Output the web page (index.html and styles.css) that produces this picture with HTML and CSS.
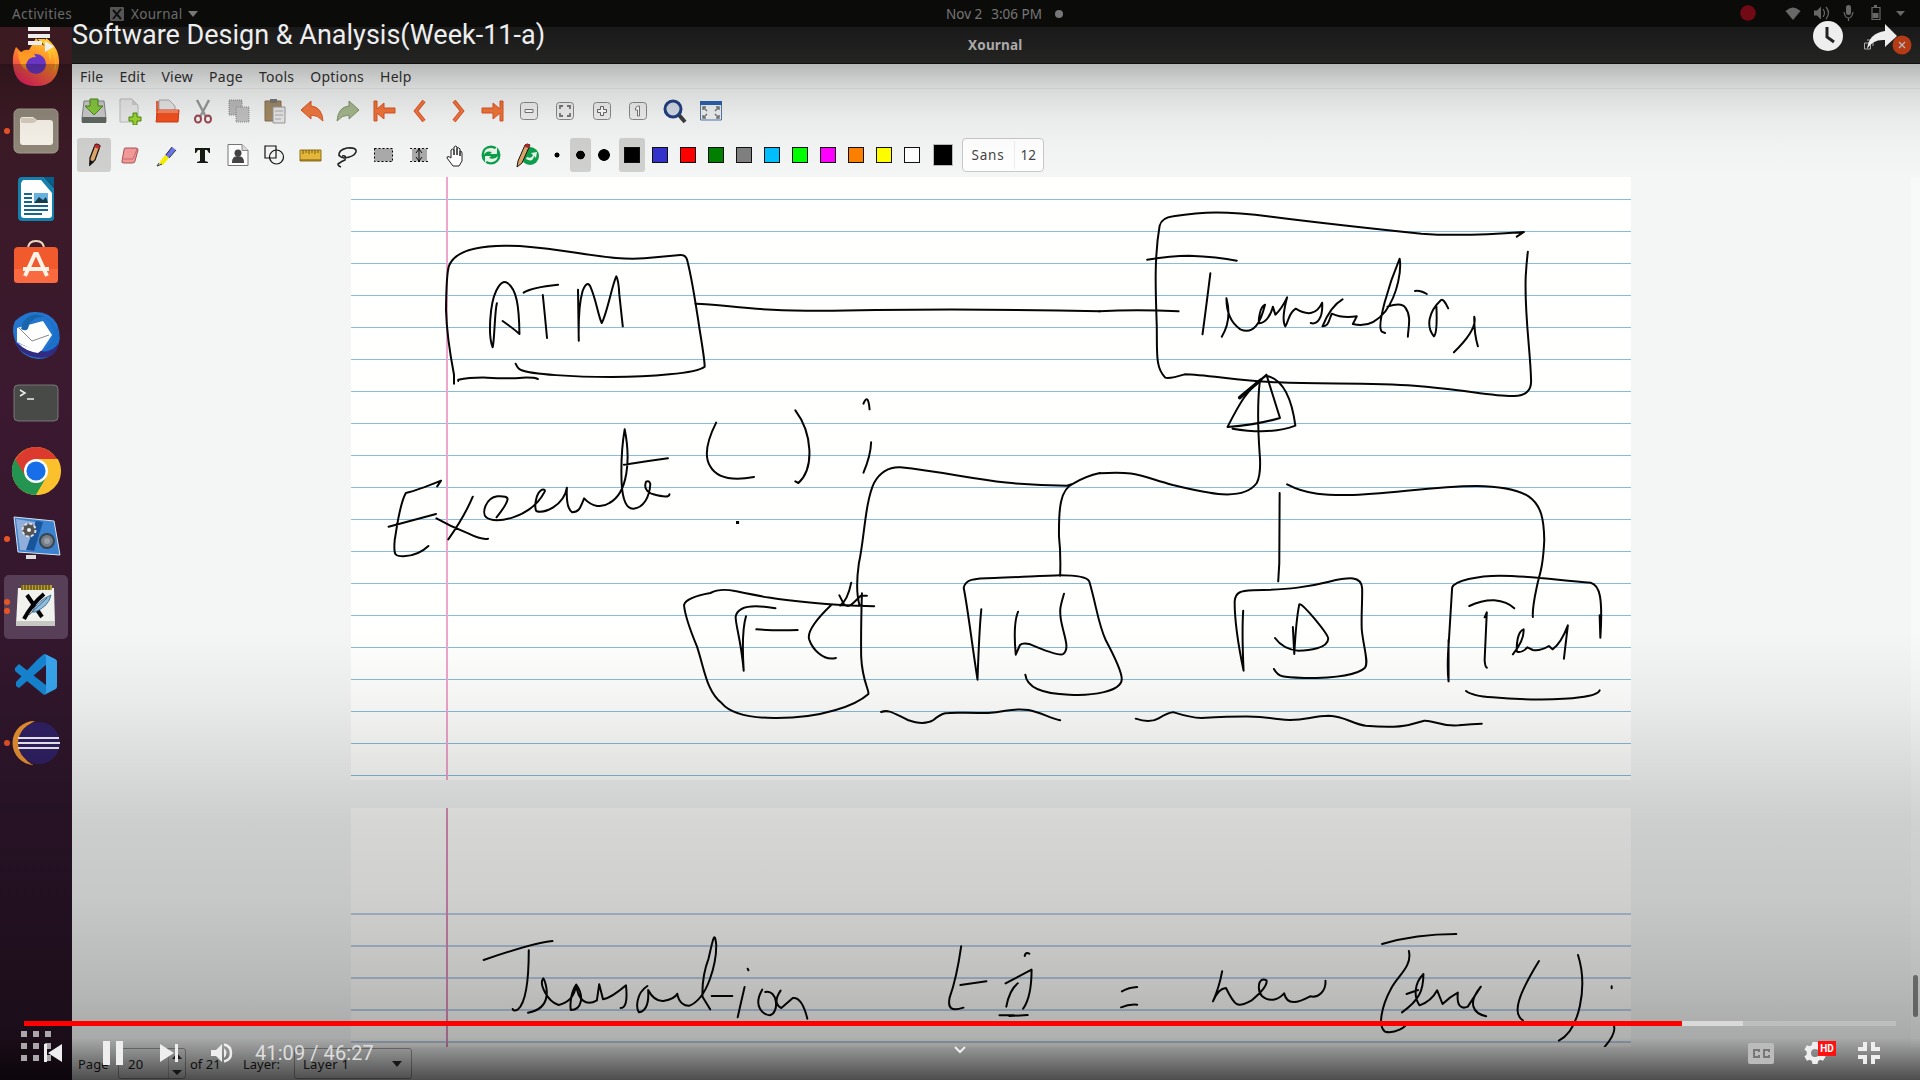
FILE: index.html
```html
<!DOCTYPE html>
<html lang="en">
<head>
<meta charset="utf-8">
<title>Software Design &amp; Analysis(Week-11-a)</title>
<link rel="stylesheet" href="styles.css">
</head>
<body>
<div class="player">
<header class="topbar">
  <span class="activities">Activities</span>
  <svg class="app-mark" viewBox="0 0 14 14"><rect width="14" height="14" rx="1" fill="#555"/><path d="M3 3l8 9M11 2L3 12" stroke="#111" stroke-width="2"/></svg>
  <span class="app-name">Xournal</span>
  <svg class="app-arrow" viewBox="0 0 10 6"><path d="M0 0h10L5 6z" fill="#777"/></svg>
  <div class="clock"><span>Nov 2</span><span>3:06 PM</span><i></i></div>
  <svg class="tray" viewBox="0 0 180 27">
    <circle cx="8" cy="13" r="7.8" fill="#720a16"/>
    <g fill="#686868"><path d="M45.500 11q7.500-7 15 0l-7.500 9z"/><path d="M74 10.500h3l4-4v13l-4-4h-3z"/><rect x="106" y="5" width="5" height="10" rx="2.500"/><path d="M132.500 13h6v5h-6zM134 5h3v2h-3zM156 11h9l-4.500 5z"/></g>
    <path d="M83 9q3 4 0 8M86 7q5 6 0 12M104 12q1 6 4.500 6t4.500-6M108.500 18v3M132 7.500h8v12h-8z" fill="none" stroke="#686868" stroke-width="1.200"/>
  </svg>
</header>

<div class="desktop">
<nav class="dock">
  <div class="app"><svg viewBox="0 0 64 64"><defs><linearGradient id="ff" x1=".8" y1="0" x2=".3" y2="1"><stop offset="0" stop-color="#ffd43b"/><stop offset=".45" stop-color="#ff8a24"/><stop offset="1" stop-color="#e91f63"/></linearGradient></defs><path d="M12 16l5 5q4-3 8-2l7-12q3 5 9 8l1-8q14 10 13 26-2 22-23 22T9 34q-1-10 3-18z" fill="url(#ff)"/><circle cx="32" cy="33" r="10" fill="#6936c4"/><path d="M14 21l8 1q7-2 10 4-7 0-9 5-3 5 1 9-10-5-10-19z" fill="#ff9b25"/><path d="M33 8q12 7 13 22 2-5 0-11 10 11 4 22 6-19-9-33z" fill="#ffc72d"/></svg></div>
  <div class="app one"><svg viewBox="0 0 64 64"><rect x="10" y="10" width="44" height="44" rx="5" fill="#8f8778" stroke="#a39d90"/><path d="M16 21q0-3 3-3h10l4 3h13q3 0 3 3v19q0 3-3 3H19q-3 0-3-3z" fill="#f6f1e9"/><path d="M17 19h13l3 3-4 2H17z" fill="#d6cdbe"/></svg></div>
  <div class="app"><svg viewBox="0 0 64 64"><path d="M18 10h22l10 11v30q0 3-3 3H18q-4 0-4-4V14q0-4 4-4z" fill="#1580ac"/><path d="M19 13h18l11 13v22q0 3-3 3H20q-3 0-3-3V16z" fill="#fff"/><path d="M40 10h10v10z" fill="#06608c"/><path d="M20 27h8m-8 4h8m-8 4h8m-8 4h24m-24 4h24m-24 4h18" stroke="#17658b" stroke-width="1.800"/><rect x="30" y="26" width="14" height="10" fill="#65b2e1"/><path d="M30 36l5-6 4 3 3-3 2 6z" fill="#183b4a"/></svg></div>
  <div class="app"><svg viewBox="0 0 64 64"><g transform="translate(0 2)"><path d="M24 12q0-8 8-8t8 8" fill="none" stroke="#eed9bf" stroke-width="2"/><rect x="10" y="10" width="44" height="36" rx="4" fill="#f15a2c"/><path d="M10 32h44v11q0 3-3 3H13q-3 0-3-3z" fill="#ff7550" opacity=".6"/><path d="M21 39l10-22h2l10 22M19 32h26" fill="none" stroke="#fff2e7" stroke-width="4"/></g></svg></div>
  <div class="app"><svg viewBox="0 0 64 64"><path d="M11 18Q22 8 32 9q14 0 21 12 6 15-1 26-6 9-18 9-16-2-21-14Q6 28 11 18z" fill="#2375cf"/><path d="M13 25l26-7 9 14-12 18-23-11z" fill="#fff"/><path d="M15 25l13 13 17-6" fill="none" stroke="#888"/><path d="M19 19q9-12 22-5-12-1-16 8-1 8-8 4z" fill="#1765ac"/><path d="M10 39q14 8 31 9 8-9 12-23 6 22-8 29-24 4-35-15z" fill="#322b84"/><path d="M14 40q12 6 24 7l-4 3q-13-2-20-10z" fill="#fff"/><path d="M40 14q14 10 7 25-3 7-9 10 13-1 17-10 1-18-15-25z" fill="#1971cb"/></svg></div>
  <div class="app"><svg viewBox="0 0 64 64"><rect x="10" y="14" width="44" height="36" rx="4" fill="#484a48" stroke="#777"/><path d="M16 19l5 3-5 3" fill="none" stroke="#eee" stroke-width="1.500"/><path d="M23 28h7" stroke="#eee" stroke-width="1.500"/></svg></div>
  <div class="app"><svg viewBox="0 0 64 64"><circle cx="32" cy="32" r="24" fill="#f5c027"/><path d="M32 20h21A24 24 0 0 0 11 21l10 17z" fill="#dc3a2f"/><path d="M11 20a24 24 0 0 0 21 36l11-18H22z" fill="#249451"/><path d="M32 20h21.800A24 24 0 0 1 32 56l10.400-18z" fill="#fbc12c"/><circle cx="32" cy="32" r="12" fill="#fff"/><circle cx="32" cy="32" r="9.600" fill="#176ee8"/></svg></div>
  <div class="app one"><svg viewBox="0 0 64 64"><path d="M10 10l40 4 6 34-42-3z" fill="#3b82d0" stroke="#dde2ec"/><path d="M12 12l19 3-1 29-14-1z" fill="#91add9"/><path d="M32 14l7 1-9 29-8-1z" fill="#19559a"/><circle cx="25" cy="23" r="6.500" fill="#555" stroke="#ddd" stroke-width="2" stroke-dasharray="3 2"/><circle cx="25" cy="23" r="2" fill="#eee"/><circle cx="43" cy="34" r="7" fill="#777f88" stroke="#39444e" stroke-width="2"/><circle cx="43" cy="34" r="3" fill="#99a0aa"/><path d="M22 48h10v4H22z" fill="#ddd"/></svg></div>
  <div class="app two current"><svg viewBox="0 0 64 64"><path d="M14 13h36l1 37H12z" fill="#f1f1ee"/><path d="M12 46h39v5H12z" fill="#c7c7c3"/><path d="M17 10h31v5H17z" fill="#baa032"/><path d="M18 10v5m3-5v5m3-5v5m3-5v5m3-5v5m3-5v5m3-5v5m3-5v5m3-5v5m3-5v5" stroke="#3b2f05"/><path d="M23 20l15 22M40 19Q28 29 20 44" stroke="#050505" stroke-width="4" fill="none"/><path d="M28 37q5-11 19-17-2 11-16 17z" fill="#91bddd" stroke="#43739a"/><path d="M25 40l18-17" stroke="#496c85"/></svg></div>
  <div class="app"><svg viewBox="0 0 64 64"><path d="M40 11l-6 5L12 39v4l3 2 28-24v22L15 21l-4 4v3l29 24 12-6q1-1 1-3V19q0-2-2-3z" fill="#1684d1"/><path d="M41 11l10 5q2 1 2 3v24q0 2-2 3l-11 6q2-1 2-4V15q0-2-1-4z" fill="#38a5ed"/></svg></div>
  <div class="app one"><svg viewBox="0 0 64 64"><path d="M31 10A22 22 0 0 0 30 54Q16 49 18 32 18 16 31 10z" fill="#eb9332"/><circle cx="35" cy="32" r="21" fill="#302064"/><path d="M14 27h41M14 32h42M14 37h41" stroke="#f5f2f5" stroke-width="2.200"/></svg></div>
</nav>

<main class="window">
  <div class="titlebar"><b>Xournal</b></div>
  <div class="menubar"><span>File</span><span>Edit</span><span>View</span><span>Page</span><span>Tools</span><span>Options</span><span>Help</span></div>
  <div class="toolbar">
    <svg viewBox="0 0 28 28"><path d="M4 4h20l2 17v4H2v-4z" fill="#cacaca" stroke="#858585"/><path d="M2 20h24v6H2z" fill="#606660"/><path d="M10 2h8v7h5l-9 9-9-9h5z" fill="#85c73d" stroke="#4d841d"/></svg>
    <svg viewBox="0 0 28 28"><path d="M4 2h12l6 6v17H4z" fill="#e8e8e8" stroke="#bcbcbc"/><path d="M16 2v6h6" fill="#ccc"/><path d="M17 16h4v4h4v4h-4v4h-4v-4h-4v-4h4z" fill="#9bd631" stroke="#4e8a0b"/></svg>
    <svg viewBox="0 0 28 28"><path d="M3 4h8v18H3z" fill="#ed6540"/><path d="M6 3h10l6 6v14H6z" fill="#e6e6e6" stroke="#aaa"/><path d="M5 13h21l-1 12H3z" fill="#f25120" stroke="#d33c13"/><path d="M5 13h20v3H4z" fill="#f88460"/></svg>
    <svg viewBox="0 0 28 28" fill="none"><path d="M8 3l9 17M20 3l-9 17" stroke="#999" stroke-width="2.500"/><ellipse cx="9" cy="22" rx="3" ry="3.500" stroke="#9b4750" stroke-width="2"/><ellipse cx="19" cy="22" rx="3" ry="3.500" stroke="#9b4750" stroke-width="2"/></svg>
    <svg viewBox="0 0 28 28"><path d="M4 3h13v15H4z" fill="#bbb" stroke="#888" stroke-dasharray="1 1"/><path d="M11 10h13v15H11z" fill="#c2c2c2" stroke="#888" stroke-dasharray="1 1"/></svg>
    <svg viewBox="0 0 28 28"><path d="M4 4h16v20H4z" fill="#a28965" stroke="#866e4d"/><path d="M9 2h7v4H9z" fill="#777"/><path d="M12 10h12v16H12z" fill="#e7e7e7" stroke="#999"/><path d="M14 14h8m-8 4h8m-8 4h6" stroke="#aaa"/></svg>
    <svg viewBox="0 0 28 28"><path d="M3 13L13 4v5q11 1 12 15-5-6-12-6v4z" fill="#f17840" stroke="#d85522"/></svg>
    <svg viewBox="0 0 28 28"><path d="M25 13L15 4v5Q4 10 3 24q5-6 12-6v4z" fill="#a6b88d" stroke="#7f906e"/></svg>
    <svg viewBox="0 0 28 28"><path d="M4 4h3v8l7-6v5h11v5H14v6l-7-6v8H4z" fill="#f17539" stroke="#d85522"/></svg>
    <svg viewBox="0 0 28 28"><path d="M18 4L10 14l8 10" fill="none" stroke="#db592a" stroke-width="4"/><path d="M18 4L10 14l8 10" fill="none" stroke="#f47a43" stroke-width="2"/></svg>
    <svg viewBox="0 0 28 28"><path d="M11 4l8 10-8 10" fill="none" stroke="#db592a" stroke-width="4"/><path d="M11 4l8 10-8 10" fill="none" stroke="#f47a43" stroke-width="2"/></svg>
    <svg viewBox="0 0 28 28"><path d="M24 4h-3v8l-7-6v5H3v5h11v6l7-6v8h3z" fill="#f17539" stroke="#d85522"/></svg>
    <svg viewBox="0 0 28 28"><rect x="5.500" y="5.500" width="17" height="17" rx="3" fill="#eee" stroke="#888"/><path d="M10 12.500h8v3h-8z" fill="#fff" stroke="#777"/></svg>
    <svg viewBox="0 0 28 28"><rect x="5.500" y="5.500" width="17" height="17" rx="3" fill="#eee" stroke="#888"/><path d="M9 12V9h3m4 0h3v3m0 4v3h-3m-4 0H9v-3" fill="none" stroke="#777" stroke-width="1.800"/></svg>
    <svg viewBox="0 0 28 28"><rect x="5.500" y="5.500" width="17" height="17" rx="3" fill="#eee" stroke="#888"/><path d="M12.500 9.500h3v3h3v3h-3v3h-3v-3h-3v-3h3z" fill="#fff" stroke="#666"/></svg>
    <svg viewBox="0 0 28 28"><rect x="5.500" y="5.500" width="17" height="17" rx="3" fill="#eee" stroke="#888"/><path d="M11.500 11l2-2h2v10h-2v-6h-2z" fill="#fff" stroke="#777"/></svg>
    <svg viewBox="0 0 28 28"><path d="M19 18l6 7" stroke="#3e3e3e" stroke-width="4"/><circle cx="13" cy="12" r="8" fill="#d2dae5" stroke="#233f83" stroke-width="3"/></svg>
    <svg viewBox="0 0 28 28"><path d="M3.500 5h21v18h-21z" fill="#eef0f2" stroke="#5579a9"/><path d="M3 4h22v4H3z" fill="#2d60b1"/><path d="M6 13v-3h3M6 10l4 4m12-1v-3h-3m3 0l-4 4M6 18v3h3m-3 0l4-4m12 1v3h-3m3 0l-4-4" fill="none" stroke="#777" stroke-width="1.500"/></svg>
  </div>
  <div class="toolbar tools">
    <svg class="on" viewBox="0 0 28 28"><path d="M10 17L15 4q2-2 5 1l-5 14-5 5z" fill="#dda668" stroke="#171310" stroke-width="1.300"/><path d="M15 4q2-2 5 1l-1 3-5-2z" fill="#c52b31"/><path d="M9 25l1-6 4 2z" fill="#111"/></svg>
    <svg viewBox="0 0 28 28"><path d="M9 7h11q2 0 2 2l-3 11q0 2-3 2H8q-3 0-2-2l2-11q0-2 1-2z" fill="#f39999" stroke="#a55355"/><path d="M6 18h11l4-10" fill="none" stroke="#c76d70"/></svg>
    <svg viewBox="0 0 28 28"><path d="M20 6l4 3-7 8-4-3z" fill="#6974f2"/><path d="M13 14l4 3-6 7-4-2z" fill="#f5ed00"/><path d="M7 22l-2 3 5-2M20 6l-6 8M17 17l7-8" fill="none" stroke="#333"/></svg>
    <svg viewBox="0 0 28 28"><path d="M7 7h15v5h-1l-2-3h-2v11l3 1v1H9v-1l3-1V9h-2l-2 3H7z" fill="#151a15"/></svg>
    <svg viewBox="0 0 28 28"><path d="M4 3.500h14l6 6v15H4z" fill="#fff" stroke="#777"/><path d="M18 3.500v6h6" fill="#ddd" stroke="#888"/><circle cx="14" cy="12" r="3.500" fill="#444"/><path d="M8 21q0-6 6-6t6 6v1H8z" fill="#444"/></svg>
    <svg viewBox="0 0 28 28" fill="none" stroke="#111" stroke-width="1.200"><path d="M5 5h11v12H5z"/><circle cx="16.500" cy="16" r="7"/></svg>
    <svg viewBox="0 0 28 28"><path d="M3 9h21v11H3z" fill="#e5b839" stroke="#95731a"/><path d="M3 19h21M6 9v4m3-4v3m3-3v4m3-4v3m3-3v4m3-4v3" stroke="#775815"/></svg>
    <svg viewBox="0 0 28 28" fill="none" stroke="#222" stroke-width="1.600"><path d="M6 15Q5 9 14 7q10-1 9 4-2 5-12 6-5-1-5-4m3 2q5-1 3 4-3 1-7 4 0 2 3 3"/></svg>
    <svg viewBox="0 0 28 28"><path d="M5.500 7.500h18v13h-18z" fill="#aaa" stroke="#000" stroke-dasharray="2 2"/></svg>
    <svg viewBox="0 0 28 28"><path d="M7 7.500h15v13H7z" fill="#aaa"/><path d="M5 7.500h18M5 20.500h18" stroke="#111" stroke-dasharray="2 2"/><path d="M14 8v12m-3-8l3-4 3 4m-6 4l3 4 3-4" fill="none" stroke="#111"/></svg>
    <svg viewBox="0 0 28 28"><path d="M10 16V9q2-2 3 0v5-8q2-2 3 0v8-7q2-1 3 1v7-5q2 0 2 2v8l-3 5h-6l-6-8q0-3 4 0z" fill="#fff" stroke="#222"/></svg>
    <svg viewBox="0 0 28 28"><circle cx="14" cy="14" r="9.500" fill="#0b9e4b"/><path d="M7 14q0-8 8-7l3 1 2-2v7h-7l2-2q-6-2-8 3zM21 15q-1 7-9 6l-2-1-2 2v-7h6l-2 2q6 2 9-2z" fill="#e8f5e8"/></svg>
    <svg viewBox="0 0 28 28"><circle cx="17" cy="15" r="9" fill="#0b9e4b"/><path d="M13 18q7 4 8-3l2 2 1-6-6 1 2 2q-1 4-6 2z" fill="#e8f5e8"/><path d="M5 20L12 4q2-2 5 0L9 22l-5 4z" fill="#dda668" stroke="#171310"/><path d="M12 4q2-2 5 0l-1 3-5-1z" fill="#b02a2e"/></svg>
    <div class="pens"><i></i><i class="on"></i><i></i></div>
    <div class="palette"><b class="on"><i class="black"></i></b><i class="blue"></i><i class="red"></i><i class="green"></i><i class="gray"></i><i class="sky"></i><i class="lime"></i><i class="magenta"></i><i class="orange"></i><i class="yellow"></i><i class="white"></i></div>
    <i class="picked"></i>
    <div class="font"><span>Sans</span><span>12</span></div>
  </div>

  <div class="canvas">
    <div class="sheets"><section class="sheet first"></section><section class="sheet second"></section></div>
    <div class="scroll"><i></i></div>
    <svg class="ink" viewBox="72 177 1848 870">
      <g transform="translate(340 170) scale(.38265 .33333)">
        <path d="M298 641V615Q279 500 277 420Q278 310 285 287Q305 228 430 227Q490 226 585 243C700 263 750 272 825 262L889 255Q903 254 907 269C920 325 931 410 940 480Q953 570 953 590C931 610 810 621 710 621C610 621 500 613 473 600Q465 597 459 581M309 633V629Q340 622 385 623Q440 627 477 623Q508 622 517 627"/>
        <path d="M410 400C404 425 404 510 399 532C391 510 390 470 395 420C403 350 425 330 436 338C462 355 468 410 469 492Q458 480 425 453M480 368Q500 352 570 344M530 375Q535 430 541 504M622 359L624 512Q622 410 634 363Q645 330 654 349C670 390 674 435 684 459C698 430 711 345 722 319Q728 330 730 374L739 469M929 401C990 403 1050 416 1130 419Q1220 425 1400 420Q1700 416 1986 424"/>
        <path d="M254 949L264 932Q200 962 172 969C155 1005 149 1070 143 1110C139 1160 146 1159 166 1159Q205 1157 231 1128M127 1070L251 1032M252 1045Q290 1070 335 1090Q370 1110 387 1106M347 980Q325 1040 283 1108M409 1042Q435 1005 438 988Q438 977 411 979C380 984 370 1030 382 1042C405 1065 500 1043 535 965Q537 957 528 959C510 970 508 1013 513 1023C532 1032 585 1008 593 953Q590 1015 607 1027C625 1027 628 1013 638 985C660 1012 685 1014 704 999C752 970 760 870 744 778Q733 850 736 940Q740 1018 767 1016C794 1013 809 980 811 942Q808 930 800 935C794 950 800 967 819 973Q860 986 861 973M742 884Q800 874 857 865M983 758C958 815 952 860 967 888Q992 940 1082 921M1190 721C1235 790 1240 895 1198 939L1190 934M1368 701Q1380 668 1384 718M1388 817Q1387 857 1368 908"/>
        <rect x="1035" y="1053" width="7" height="8" fill="#050505"/>
      </g>
      <g transform="translate(1100 190) scale(.35714 .33333)">
        <path d="M1167 140L1187 126Q1010 140 900 131C810 121 590 95 480 80C350 63 290 64 205 79Q173 83 167 107C151 205 156 310 159 410C160 490 155 534 183 563Q195 567 237 553C300 554 400 575 500 577C620 583 760 577 880 587C1010 597 1110 621 1160 618Q1209 617 1207 570C1205 480 1188 370 1192 260Q1194 220 1198 185"/>
        <path d="M132 209Q200 197 249 197Q330 200 383 212M309 250Q295 370 287 433M341 440Q370 390 354 325Q354 390 393 418C430 435 449 400 462 344C447 350 443 393 446 400C465 399 479 373 484 350L491 374Q509 356 524 322Q507 390 519 409C530 390 527 370 548 356Q600 390 622 338C625 385 607 405 590 399M679 328Q646 348 623 409C642 409 642 385 649 371Q680 386 719 379L708 402C739 411 771 401 799 364C836 310 844 235 839 206C810 280 773 407 789 425L798 429M805 350Q845 336 855 353C873 379 863 412 862 440M882 303Q895 300 915 312M975 355Q962 325 955 330C920 365 912 409 935 439Q945 430 942 350M991 487Q1058 417 1048 380Q1047 429 1058 469M-2 364Q100 358 220 364"/>
        <path d="M391 623L466 554Q485 620 504 684Q440 704 357 711C390 642 411 598 465 557Q530 570 547 707Q480 735 371 716M448 570C441 630 441 700 447 790Q452 850 439 879C400 936 300 910 204 885C112 858 100 842 0 850"/>
        <path class="bold" d="M391 623L450 570"/>
      </g>
      <g transform="translate(640 440) scale(.38265 .33333)">
        <path d="M1202 99Q1165 108 1132 131L1116 137C920 137 840 101 680 82Q636 80 612 128C588 185 586 300 572 370Q562 450 574 497M1132 131C1098 148 1094 205 1095 290Q1100 340 1098 407M552 428Q543 480 523 497L533 493 521 466M533 493Q545 505 558 488L577 467H593M612 499Q520 496 450 488C350 478 310 468 248 453Q208 444 184 459Q120 472 115 495Q118 534 149 620C169 690 174 754 214 790C261 853 430 838 509 811Q569 791 597 762C598 746 581 723 578 650Q577 570 580 460M354 505C292 492 255 500 250 530C249 552 264 600 271 692C267 620 269 560 277 529M304 568Q360 573 412 570M499 496C460 539 436 575 442 598C450 625 477 664 512 654"/>
        <path d="M892 508Q887 560 882 719C866 600 856 500 846 444C850 418 870 415 926 414C990 412 1052 407 1098 406Q1166 406 1174 424C1193 498 1197 550 1217 600Q1260 693 1259 718C1257 755 1182 768 1122 764C1058 762 1011 745 1007 704M988 515C978 543 978 595 982 644L993 615Q1000 607 1020 613Q1095 650 1106 642C1125 625 1107 587 1100 539C1096 510 1098 500 1108 461M630 816C650 808 660 818 700 840Q742 858 767 840C798 810 800 819 910 819C960 815 974 803 1015 810C1044 816 1070 833 1098 841"/>
        <rect x="251" y="243" width="8" height="9" fill="#050505"/>
      </g>
      <g transform="translate(1080 440) scale(.35714 .33333)">
        <path d="M580 133C640 167 700 165 750 165C865 163 980 139 1110 138Q1210 139 1256 169C1293 196 1299 242 1300 300C1297 370 1290 395 1282 426C1273 472 1266 500 1268 531M559 159L558 370 555 424M457 512Q453 575 458 692C444 620 433 540 433 485C435 455 450 453 485 451C590 449 641 440 697 425C755 411 788 407 790 445C791 480 787 530 789 570C795 628 809 669 798 683C773 709 700 714 630 714C566 712 556 712 543 687M596 561L600 642Q605 540 614 493C620 484 696 584 695 596C694 625 641 632 611 632Q569 628 546 594M1032 724Q1027 680 1033 600L1042 443C1048 422 1115 407 1175 407C1270 408 1340 421 1430 428C1456 435 1464 475 1457 593L1455 526M1032 600V724M1090 498Q1125 480 1160 481Q1197 485 1216 505M1133 532L1139 517Q1136 590 1133 660Q1134 680 1139 683M1212 643C1237 610 1244 590 1242 568C1225 574 1222 613 1223 634Q1234 642 1253 622L1268 630Q1288 634 1313 618L1323 628Q1347 610 1366 556L1355 656M1081 753Q1098 768 1155 772C1240 781 1350 780 1400 772Q1450 765 1455 751"/>
        <path d="M156 836Q195 851 220 835Q250 816 263 817Q310 833 340 834C450 828 500 827 560 838C620 848 646 827 697 827C744 829 761 852 800 857C840 861 890 862 920 855L964 842C990 840 1007 860 1060 856Q1100 852 1125 851"/>
      </g>
      <g transform="translate(440 890) scale(.7653 .33333)">
        <path d="M57 210Q120 160 147 153M116 181Q116 330 102 358Q96 366 95 357M115 368C149 355 139 280 135 265C129 280 140 335 155 345Q175 335 178 284C170 310 170 350 171 360C185 360 189 320 178 284C180 330 191 350 205 331L208 283 213 328Q223 325 243 286C245 330 243 355 236 354M271 288C256 310 256 355 260 367C275 360 272 310 272 300Q280 335 292 333Q307 327 310 311C312 340 320 348 326 347C350 325 361 220 361 166C359 120 357 143 351 205Q342 260 343 320L353 358M355 318H382M398 291Q393 340 389 382M402 236L403 241M421 299C408 350 423 375 431 376C444 368 441 297 425 306M445 302Q434 340 446 354L461 324Q473 320 480 386"/>
        <path d="M681 169Q675 265 666 322C663 355 668 365 684 353M680 285L714 274M764 198Q765 185 770 191M739 280L773 239Q773 320 762 356M755 280Q744 300 740 350M731 376H750L744 378L768 375M891 304Q900 292 911 291M890 352Q900 342 911 344"/>
        <path d="M1022 244Q1018 293 1010 334Q1017 295 1027 294C1039 350 1042 355 1060 332Q1082 290 1080 271C1068 258 1068 303 1074 318C1085 340 1097 326 1103 310C1107 350 1122 337 1137 319C1149 325 1158 300 1157 272M1231 162Q1275 132 1328 132M1266 183C1271 230 1250 260 1243 295C1230 350 1225 410 1235 425C1248 432 1263 410 1263 400M1257 367C1280 330 1285 300 1285 252C1273 280 1272 320 1280 346Q1295 335 1303 301L1310 342Q1320 320 1330 308C1328 350 1335 358 1343 350L1360 290C1342 340 1350 370 1367 379M1263 312L1278 300M1436 213C1410 310 1400 370 1415 391M1487 195C1500 290 1489 420 1462 452M1531 289V295M1534 408Q1537 430 1522 470"/>
      </g>
    </svg>
  </div>

  <footer class="status"><span>Page</span><div class="spin"><span>20</span><i><svg viewBox="0 0 16 31"><path d="M3 10l5-6 5 6zM3 21h10l-5 5z" fill="#333"/></svg></i></div><span class="of">of 21</span><span class="layer">Layer:</span><div class="combo"><span>Layer 1</span><svg viewBox="0 0 10 6"><path d="M0 0h10L5 6z" fill="#333"/></svg></div></footer>
</main>
</div>

<div class="shade"></div>
<div class="headline">Software Design &amp; Analysis(Week-11-a)</div>
<svg class="overlay queue" viewBox="0 0 26 26"><path d="M0 0h22v4H0zM0 7h22v4H0zM0 14h14v4H0zM17 14l9 5.500-9 5.500z" fill="#eee"/></svg>
<svg class="overlay actions" viewBox="0 0 110 40">
  <circle cx="92" cy="25" r="9.500" fill="#b53a16"/><path d="M89 22l6 6m0-6l-6 6" stroke="#bbb" stroke-width="1.300"/><path d="M54.500 23h6v6h-6zM57 20h6v6" fill="none" stroke="#aaa"/>
  <circle cx="18" cy="16" r="15" fill="#eee"/><path d="M17 7v10l7 5" fill="none" stroke="#222" stroke-width="3"/>
  <path d="M75 4l12 12-12 11v-7Q63 19 57 29q2-16 18-18z" fill="#eee"/>
</svg>
<div class="overlay progress"><i class="played"></i><i class="loaded"></i></div>
<svg class="overlay grid" viewBox="0 0 30 30"><path d="M0 0h6v6H0zM12 0h6v6h-6zM24 0h6v6h-6zM0 12h6v6H0zM12 12h6v6h-6zM24 12h6v6h-6zM0 24h6v6H0zM12 24h6v6h-6zM24 24h6v6h-6z" fill="#aaa6aa"/></svg>
<div class="overlay controls">
  <svg class="skip" viewBox="0 0 18 18"><path d="M0 0h3v18H0zM18 0v18L4 9z"/></svg>
  <svg class="pause" viewBox="0 0 20 24"><path d="M0 0h7v24H0zM13 0h7v24h-7z"/></svg>
  <svg class="skip next" viewBox="0 0 18 18"><path d="M15 0h3v18h-3zM0 0l14 9-14 9z"/></svg>
  <svg class="volume" viewBox="0 0 22 20"><path d="M0 7h5l6-6v18l-6-6H0zM13 5q5 5 0 10z"/><path d="M13 1.500q7 1.500 7 8.500t-7 8.500" fill="none" stroke="#eee" stroke-width="2.500"/></svg>
  <span class="time">41:09 / 46:27</span>
  <svg class="more" viewBox="0 0 12 8"><path d="M1 1l5 5 5-5" fill="none" stroke="#eee" stroke-width="2"/></svg>
  <svg class="cc" viewBox="0 0 26 21"><rect width="26" height="21" rx="2" fill="#bbb"/><path d="M11 9V7H6v7h5v-2M21 9V7h-5v7h5v-2" fill="none" stroke="#777" stroke-width="2"/></svg>
  <div class="settings"><svg viewBox="0 0 22 22"><path fill-rule="evenodd" d="M8.500 0h5l.7 3 2 1.100 2.900-1 2.500 4.300-2.300 2v3l2.300 2-2.500 4.300-2.900-1-2 1.200-.7 3.100h-5l-.7-3-2-1.200-2.900 1L.4 14.500l2.300-2v-3l-2.300-2L2.900 3.200l2.900 1 2-1.200zM11 7a4 4 0 1 0 0 8 4 4 0 0 0 0-8z"/></svg><b>HD</b></div>
  <svg class="exit" viewBox="0 0 22 22"><path d="M5 0h4v9H0V5h5zM13 0h4v5h5v4h-9zM0 13h9v9H5v-5H0zM13 13h9v4h-5v5h-4z"/></svg>
</div>
</div>
</body>
</html>
```
FILE: styles.css
```css
* { box-sizing: border-box; }
body { margin: 0; font-family: "Noto Sans", sans-serif; }
i { font-style: normal; display: block; }
svg { display: block; flex: none; }
.player { position: relative; width: 1920px; height: 1080px; overflow: hidden; background: #111; }
.topbar { height: 27px; display: flex; align-items: center; background: #0b0b0a; color: #6c6c6c; font-size: 13.5px; line-height: 18px; padding-left: 12px; }
.activities { width: 98px; letter-spacing: .4px; }
.app-mark { width: 14px; height: 14px; margin-right: 7px; }
.app-name { width: 57px; letter-spacing: .3px; }
.app-arrow { width: 10px; height: 6px; }
.clock { margin-left: 748px; width: 130px; display: flex; align-items: center; gap: 9px; white-space: nowrap; color: #777; }
.clock i { width: 8px; height: 8px; border-radius: 50%; background: #777; margin-left: 4px; }
.tray { width: 180px; height: 27px; margin-left: 664px; }
.desktop { display: flex; height: 1053px; }
.dock { width: 72px; padding: 4px 4px 0; display: flex; flex-direction: column; gap: 4px; background: linear-gradient(#3b1a21, #3b1930 35%, #2d152b 75%, #251222); }
.app { position: relative; width: 64px; height: 64px; border-radius: 5px; }
.app svg { width: 64px; height: 64px; }
.current { background: #574057; }
.one::before, .two::before, .two::after { content: ""; position: absolute; left: 0; top: 29px; width: 6px; height: 6px; border-radius: 50%; background: #e95427; }
.two::before { top: 24px; }
.two::after { top: 33px; }
.window { flex: 1; display: flex; flex-direction: column; background: #f4f6f5; }
.titlebar { height: 37px; background: linear-gradient(#191919, #242423); border-bottom: 1px solid #111; color: #aaa; font-size: 13.5px; line-height: 37px; padding-left: 896px; letter-spacing: .2px; }
.menubar { height: 25px; display: flex; align-items: center; gap: 16px; padding-left: 8px; border-bottom: 1px solid #e6e8e7; color: #333; font-size: 14px; letter-spacing: .25px; }
.toolbar { height: 44px; display: flex; align-items: center; padding-left: 8px; gap: 8.28px; }
.toolbar > svg { width: 28px; height: 28px; }
.toolbar.tools { gap: 8.1px; }
.toolbar > svg.on { width: 34px; height: 34px; padding: 3px; margin: 0 -3px; background: #d0d0cf; border-radius: 3px; }
.pens { display: flex; width: 66px; align-items: center; margin-left: -1px; }
.pens i { width: 22px; height: 34px; border-radius: 3px; background: radial-gradient(circle at 9px 50%, #000 2.2px, transparent 2.8px); }
.pens i.on { background: radial-gradient(circle, #000 4px, transparent 4.7px) #d0d0cf; }
.pens i:last-child { width: 24px; background: radial-gradient(circle at 13px 50%, #000 5.5px, transparent 6.2px); }
.palette { display: flex; align-items: center; gap: 12px; margin-left: -3px; }
.palette b { width: 26px; height: 34px; margin-right: -5px; background: #d0d0cf; border-radius: 3px; display: grid; place-items: center; }
.palette i { width: 16px; height: 16px; border: 1px solid #111; }
.black { background: #000; } .blue { background: #3333cc; } .red { background: #f00; } .green { background: #008000; } .gray { background: #808080; } .sky { background: #00c0ff; } .lime { background: #0f0; } .magenta { background: #f0f; } .orange { background: #ff8000; } .yellow { background: #ff0; } .white { background: #fff; }
.picked { width: 20px; height: 22px; background: #000; border: 1px solid #bbb; margin-left: 5px; }
.font { width: 82px; height: 34px; display: flex; align-items: center; background: #fff; border: 1px solid #c8c8c8; border-radius: 4px; font-size: 13.5px; color: #444; }
.font span { padding-left: 9px; line-height: 28px; letter-spacing: .8px; }
.font span:first-child { width: 52px; border-right: 1px solid #eee; }
.font span:last-child { padding-left: 6px; letter-spacing: 0; }
.canvas { position: relative; height: 870px; display: flex; justify-content: space-between; }
.sheets { padding-left: 279px; display: flex; flex-direction: column; gap: 28px; }
.sheet { width: 1280px; background-color: #fffffe; background-repeat: no-repeat, repeat-y; }
.first { height: 603px; background-image: linear-gradient(90deg, transparent 95px, #efa5cd 95px, #efa5cd 97px, transparent 97px), repeating-linear-gradient(transparent 0, transparent 21.600px, #86bcdd 21.600px, #86bcdd 23px, transparent 23px, transparent 32px); }
.second { height: 239px; background-image: linear-gradient(90deg, transparent 95px, #df8fbd 95px, #df8fbd 97px, transparent 97px), linear-gradient(#fffffe 96px, transparent 96px), repeating-linear-gradient(transparent 0, transparent 9px, #bcd2ec 9px, #bcd2ec 11px, transparent 11px, transparent 32px); }
.scroll { width: 9px; background: #f8f9f9; padding: 798px 3px 0 2px; }
.scroll i { width: 5px; height: 42px; border-radius: 3px; background: #878a89; }
.ink { position: absolute; left: 0; top: 0; width: 1848px; height: 870px; }
.ink path { fill: none; stroke: #050505; stroke-width: 2px; stroke-linecap: round; stroke-linejoin: round; vector-effect: non-scaling-stroke; }
.ink path.bold { stroke-width: 3.5px; }
.status { height: 33px; display: flex; align-items: center; padding-left: 6px; font-size: 13px; color: #222; }
.status > span:first-child { width: 40px; }
.spin { width: 68px; height: 31px; display: flex; border: 1px solid #a5a5a5; border-radius: 3px; justify-content: space-between; padding-left: 9px; line-height: 30px; letter-spacing: .3px; }
.spin i { border-left: 1px solid #c5c5c5; }
.spin svg { width: 16px; height: 31px; }
.of { margin-left: 4px; width: 53px; }
.layer { width: 51px; }
.combo { width: 118px; height: 31px; border: 1px solid #a5a5a5; border-radius: 3px; display: flex; align-items: center; justify-content: space-between; padding: 0 9px 0 8px; letter-spacing: .3px; }
.combo svg { width: 10px; height: 6px; }
.shade { position: absolute; inset: 0; background: linear-gradient(transparent 64px, rgba(0,0,0,.25) 64px, rgba(0,0,0,.115) 89px, rgba(0,0,0,.045) 118px, rgba(0,0,0,.01) 148px, transparent 177px, transparent 630px, rgba(0,0,0,.045) 700px, rgba(0,0,0,.12) 780px, rgba(0,0,0,.16) 820px, rgba(0,0,0,.19) 900px, rgba(0,0,0,.25) 985px, rgba(0,0,0,.31) 1038px, rgba(0,0,0,.4) 1048px, rgba(0,0,0,.69) 1080px); }
.headline { position: absolute; left: 72px; top: 18px; font: 27px/34px Roboto, sans-serif; color: #eee; white-space: nowrap; }
.overlay { position: absolute; }
.queue { left: 28px; top: 27px; width: 26px; height: 26px; }
.actions { left: 1810px; top: 20px; width: 110px; height: 40px; }
.progress { left: 24px; top: 1021px; width: 1872px; height: 5px; display: flex; background: rgba(255,255,255,.2); }
.played { width: 1658px; background: #f00; }
.loaded { width: 61px; background: #d8d9d8; }
.grid { left: 21px; top: 1031px; width: 30px; height: 30px; }
.controls { left: 44px; top: 1036px; width: 1836px; height: 34px; display: flex; align-items: center; fill: #eee; }
.skip { width: 18px; height: 18px; }
.pause { width: 20px; height: 24px; margin-left: 41px; }
.next { margin-left: 37px; }
.volume { width: 22px; height: 20px; margin-left: 33px; }
.time { width: 119px; margin-left: 22px; font: 20px/24px Roboto, sans-serif; color: #ddd; white-space: nowrap; letter-spacing: .08px; }
.more { width: 12px; height: 8px; margin-left: 580px; margin-top: -6px; }
.cc { width: 26px; height: 21px; margin-left: 782px; }
.settings { position: relative; margin-left: 30px; }
.settings svg { width: 22px; height: 22px; }
.settings b { position: absolute; left: 14px; top: -1px; width: 18px; height: 15px; background: #f11; color: #fff; font: bold 10px/15px Roboto, sans-serif; text-align: center; }
.exit { width: 22px; height: 22px; margin-left: auto; }
```
